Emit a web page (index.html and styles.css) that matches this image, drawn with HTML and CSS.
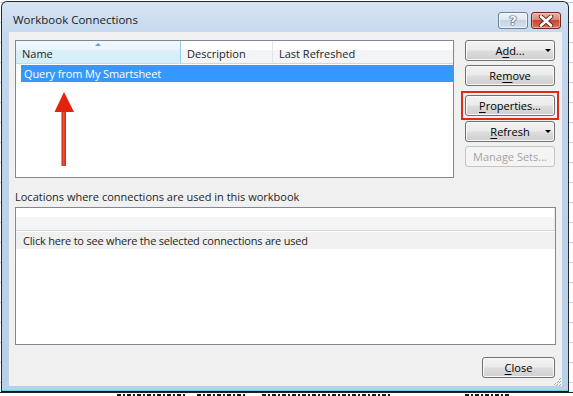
FILE: index.html
```html
<!DOCTYPE html>
<html lang="en">
<head>
<meta charset="utf-8">
<title>Workbook Connections</title>
<link rel="stylesheet" href="styles.css">
</head>
<body>
<div class="desktop">
  <div class="dialog">
    <div class="titlebar">
      <span class="title">Workbook Connections</span>
      <div class="caption-btns">
        <div class="cap help">?</div>
        <div class="cap close">
          <svg width="16" height="12" viewBox="0 0 16 12">
            <path d="M3 1.5 L13 10.5 M13 1.5 L3 10.5" stroke="#5b2a22" stroke-width="4.4" stroke-linecap="round"/>
            <path d="M3 1.5 L13 10.5 M13 1.5 L3 10.5" stroke="#ffffff" stroke-width="2.6" stroke-linecap="round"/>
          </svg>
        </div>
      </div>
    </div>
    <div class="panel">
      <div class="top">
        <div class="listbox">
          <div class="lv-head">
            <div class="col name"><span class="sort"></span><span class="coltext">Name</span></div>
            <div class="col desc"><span class="coltext">Description</span></div>
            <div class="col last"><span class="coltext">Last Refreshed</span></div>
          </div>
          <div class="lv-row">Query from My Smartsheet</div>
          <svg class="annot" width="21" height="76" viewBox="0 0 21 76">
            <defs>
              <linearGradient id="shaft" x1="0" x2="1" y1="0" y2="0">
                <stop offset="0" stop-color="#d3200c"/>
                <stop offset="0.5" stop-color="#f0533a"/>
                <stop offset="1" stop-color="#d3200c"/>
              </linearGradient>
            </defs>
            <rect x="7.5" y="18" width="4.5" height="57" fill="url(#shaft)"/>
            <polygon points="10,1 0.5,21 20,21" fill="#e2230d"/>
          </svg>
        </div>
        <div class="btns">
          <div class="btn drop"><span></span><span class="lbl">A<u>d</u>d...</span><span class="caret"></span></div>
          <div class="btn gap4"><span class="lbl">Re<u>m</u>ove</span></div>
          <div class="hl">
            <div class="btn"><span class="lbl"><u>P</u>roperties...</span></div>
          </div>
          <div class="btn drop gap1"><span></span><span class="lbl"><u>R</u>efresh</span><span class="caret"></span></div>
          <div class="btn disabled gap4"><span class="lbl">Manage Sets...</span></div>
        </div>
      </div>
      <div class="label">Locations where connections are used in this workbook</div>
      <div class="locbox">
        <div class="loc-head"></div>
        <div class="loc-row">Click here to see where the selected connections are used</div>
      </div>
      <div class="footer">
        <div class="btn closebtn"><span class="lbl"><u>C</u>lose</span></div>
      </div>
      <svg class="grip" width="10" height="10" viewBox="0 0 10 10">
        <g fill="#a7a7a7">
          <rect x="8" y="2" width="1" height="1"/><rect x="7" y="3" width="1" height="1"/>
          <rect x="8" y="5" width="1" height="1"/><rect x="6" y="5" width="1" height="1"/><rect x="5" y="6" width="1" height="1"/><rect x="7" y="6" width="1" height="1"/>
          <rect x="8" y="8" width="1" height="1"/><rect x="5" y="8" width="1" height="1"/><rect x="2" y="8" width="1" height="1"/>
          <rect x="4" y="9" width="1" height="1"/><rect x="3" y="7" width="1" height="1"/><rect x="7" y="9" width="1" height="1"/>
        </g>
      </svg>
    </div>
  </div>
  <div class="sheet-row">
    <span class="frag f1"></span>
    <span class="frag f2"></span>
    <span class="frag f3"></span>
    <span class="frag f4"></span>
  </div>
</div>
</body>
</html>
```
FILE: styles.css
```css
html, body {
  margin: 0;
  padding: 0;
}
body {
  width: 573px;
  height: 396px;
  overflow: hidden;
  font-family: "Open Sans", "Noto Sans", sans-serif;
  font-size: 11px;
  color: #000;
  background-color: #fff;
  background-image:
    linear-gradient(to bottom, transparent 19px, #b7cfe9 19px, #b7cfe9 20px);
  background-size: 100% 20px;
  background-position: 0 3px;
}
.desktop {
  display: flex;
  flex-direction: column;
  width: 573px;
  height: 396px;
}
.dialog {
  margin: 1px 0 0 1px;
  width: 568px;
  height: 391px;
  box-sizing: border-box;
  border: 1px solid #252a30;
  border-bottom-color: #111;
  border-radius: 6px 6px 0 0;
  background: linear-gradient(to bottom, #d7e5f4 0px, #c6d9ee 30px, #bdd3ea 120px, #b9d0e9 100%);
  box-shadow: inset 0 -1px 0 #6fd0e8;
  padding: 0 6px 5px 7px;
  display: flex;
  flex-direction: column;
}
.titlebar {
  height: 30px;
  display: flex;
  flex: none;
}
.title {
  margin: 10px 0 0 4px;
  height: 16px;
  line-height: 16px;
  font-size: 11.5px;
  color: #1b1b1b;
}
.caption-btns {
  margin-left: auto;
  margin-top: 10px;
  margin-right: 1px;
  display: flex;
  gap: 3px;
  height: 17px;
}
.cap {
  width: 30px;
  height: 17px;
  box-sizing: border-box;
  border-radius: 3px;
  display: flex;
  align-items: center;
  justify-content: center;
}
.cap.help {
  border: 1px solid #6f8195;
  background: linear-gradient(to bottom, #eef3f9 0%, #dde7f2 45%, #c4d4e6 50%, #d5e1ee 100%);
  box-shadow: inset 0 0 0 1px rgba(255,255,255,0.6);
  color: #fff;
  font-family: "DejaVu Sans", sans-serif;
  font-weight: bold;
  font-size: 13px;
  line-height: 15px;
  text-shadow: 0 0 1px #3d4a5a, 0 0 1px #3d4a5a, 0 0 1px #3d4a5a, 0 0 1px #3d4a5a;
}
.cap.close {
  border: 1px solid #6c2a22;
  background: linear-gradient(to bottom, #eab0a4 0%, #dc8876 45%, #c5472f 50%, #d2654d 85%, #e08c70 100%);
  box-shadow: inset 0 0 0 1px rgba(255,220,210,0.45);
}
.panel {
  position: relative;
  width: 553px;
  height: 354px;
  box-sizing: border-box;
  padding: 8px 6px 7px 6px;
  background: #f0f0f0;
  display: flex;
  flex-direction: column;
}
.top {
  display: flex;
  height: 138px;
  flex: none;
}
.listbox {
  position: relative;
  width: 439px;
  height: 138px;
  box-sizing: border-box;
  border: 1px solid #828790;
  background: #fff;
  display: flex;
  flex-direction: column;
}
.lv-head {
  display: flex;
  height: 23px;
  box-sizing: border-box;
  border-bottom: 1px solid #d5d5d5;
  flex: none;
}
.col {
  box-sizing: border-box;
  height: 22px;
  display: flex;
  flex-direction: column;
  background: linear-gradient(to bottom, #ffffff 0%, #ffffff 40%, #f4f5f7 41%, #f3f4f6 100%);
  border-right: 1px solid #e3e6e9;
}
.col.name {
  width: 165px;
  background: linear-gradient(to bottom, #eff8fd 0%, #eaf6fc 40%, #d9eff9 41%, #d6edf8 100%);
  border-right: 1px solid #96cfec;
  box-shadow: 0 1px 0 #b9e0f3;
}
.col.desc { width: 92px; }
.col.last { flex: 1; border-right: none; }
.sort {
  align-self: center;
  width: 0;
  height: 0;
  margin-top: 2px;
  border-left: 3px solid transparent;
  border-right: 3px solid transparent;
  border-bottom: 3px solid #6f9cc6;
}
.coltext {
  margin-top: auto;
  height: 17px;
  line-height: 16px;
  padding-left: 6px;
  color: #1e1e1e;
}
.lv-row {
  margin: 1px 0 0 5px;
  height: 17px;
  box-sizing: border-box;
  border: 1px dotted #c9782a;
  background: #3399ff;
  color: #fff;
  line-height: 15px;
  padding-left: 2px;
  letter-spacing: -0.1px;
}
.annot {
  position: absolute;
  left: 38px;
  top: 50px;
}
.btns {
  margin-left: 11px;
  width: 90px;
  display: flex;
  flex-direction: column;
}
.btn {
  height: 21px;
  box-sizing: border-box;
  border: 1px solid #707070;
  border-radius: 3px;
  background: linear-gradient(to bottom, #f2f2f2 0%, #ebebeb 48%, #dddddd 52%, #cfcfcf 100%);
  box-shadow: inset 0 0 0 1px #fbfbfb;
  display: grid;
  grid-template-columns: 1fr auto 1fr;
  align-items: center;
  line-height: 17px;
  color: #000;
}
.btn .lbl {
  grid-column: 2;
}
.btn .caret {
  grid-column: 3;
  justify-self: end;
  margin-right: 3px;
  width: 0;
  height: 0;
  border-left: 3px solid transparent;
  border-right: 3px solid transparent;
  border-top: 3px solid #000;
}
.btn u {
  text-decoration-thickness: 1px;
  text-underline-offset: 2px;
}
.gap1 { margin-top: 1px; }
.gap4 { margin-top: 4px; }
.hl {
  margin: 5px -4px 0 -4px;
  border: 2px solid #e02b14;
  padding: 2px;
}
.btn.disabled {
  border-color: #c3c6c9;
  background: #f4f4f4;
  box-shadow: none;
  color: #a4a4a4;
}
.label {
  margin-top: 11px;
  height: 16px;
  line-height: 16px;
  color: #1e1e1e;
  flex: none;
}
.locbox {
  margin-top: 2px;
  width: 541px;
  height: 138px;
  box-sizing: border-box;
  border: 1px solid #828790;
  background: #fff;
  flex: none;
}
.loc-head {
  height: 23px;
  box-sizing: border-box;
  border-bottom: 1px solid #d5d5d5;
  border-right: 1px solid #e6e8ea;
  background: linear-gradient(to bottom, #ffffff 0px, #ffffff 9px, #f4f5f7 9px, #f3f4f6 100%);
}
.loc-row {
  margin-top: 1px;
  height: 17px;
  line-height: 17px;
  padding-left: 7px;
  background: #f0f0f0;
  color: #1e1e1e;
  letter-spacing: -0.2px;
}
.footer {
  margin-top: 12px;
  display: flex;
  justify-content: flex-end;
  padding-right: 1px;
}
.closebtn {
  width: 73px;
}
.grip {
  position: absolute;
  right: 0;
  bottom: 0;
}
.sheet-row {
  height: 4px;
  display: flex;
  padding-left: 117px;
  border-top: 1px solid #222;
  background: #fff;
}
.frag {
  margin-top: 1px;
  height: 3px;
  background: repeating-linear-gradient(to right, #1a1a1a 0 4px, transparent 4px 6px, #1a1a1a 6px 8px, transparent 8px 10px);
}
.f1 { width: 68px; }
.f2 { width: 48px; margin-left: 12px; }
.f3 { width: 128px; margin-left: 17px; }
.f4 { width: 45px; margin-left: 75px; }
```
